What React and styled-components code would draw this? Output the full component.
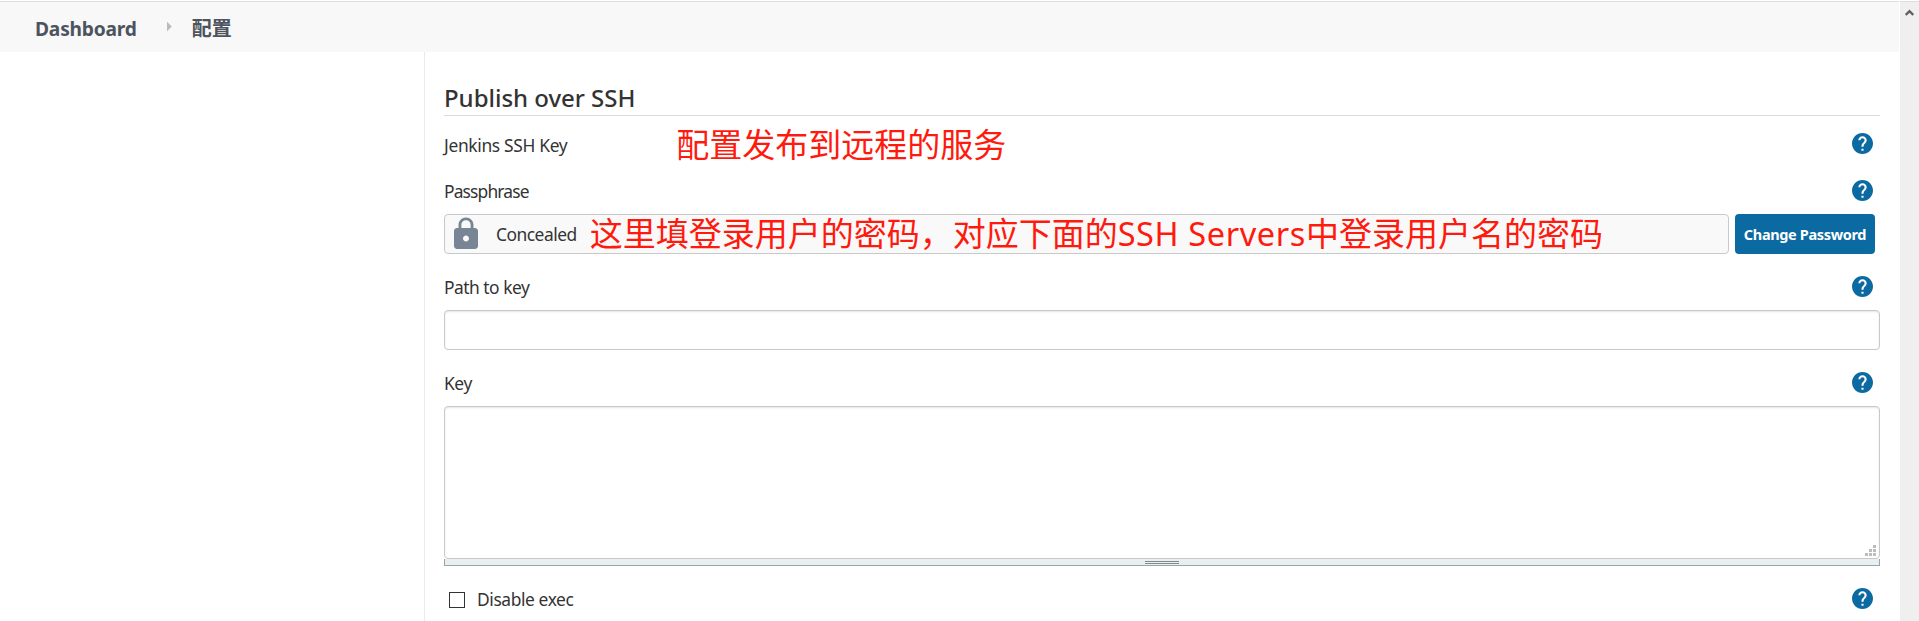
import React from "react";
import styled, { createGlobalStyle } from "styled-components";

const latin = `"Noto Sans", "Open Sans", "Noto Sans CJK SC", sans-serif`;

const GlobalStyle = createGlobalStyle`
  *, *::before, *::after { box-sizing: border-box; }
  body {
    margin: 0;
    background: #fff;
    color: #333;
    font-family: ${latin};
    font-size: 17.4px;
    overflow: hidden;
  }
`;

const Page = styled.div`
  display: flex;
  height: 621px;
`;

const Screen = styled.div`
  flex: 1;
  min-width: 0;
  display: flex;
  flex-direction: column;
`;

const Breadcrumbs = styled.nav`
  display: flex;
  align-items: center;
  height: 52px;
  margin-right: 1px;
  padding: 4px 0 0 35px;
  border-top: 1px solid #fff;
  background: #f8f8f8;
  box-shadow: inset 0 1px #dcdfdf;
`;

const Crumb = styled.a`
  color: #4d545d;
  font-size: ${(p) => p.$size}px;
  font-weight: 700;
  line-height: 28px;
  letter-spacing: ${(p) => p.$spacing || 0}px;
`;

const CrumbArrow = styled.span`
  width: 5px;
  height: 10px;
  margin: -4px 20px 0 30px;
  background: #bbb;
  clip-path: polygon(0 0, 100% 50%, 0 100%);
`;

const Body = styled.div`
  flex: 1;
  display: flex;
`;

const SidePanel = styled.aside`
  width: 425px;
  border-right: 1px solid #e6ebee;
`;

const Form = styled.main`
  flex: 1;
  display: flex;
  flex-direction: column;
  padding: 29px 20px 0 19px;
`;

const SectionTitle = styled.h2`
  height: 35px;
  margin: 0;
  border-bottom: 1px solid #dcdcdc;
  font-size: 24px;
  font-weight: 500;
  line-height: 33px;
  letter-spacing: ${(p) => p.$spacing}px;
  white-space: nowrap;
`;

const LabelRow = styled.div`
  display: flex;
  align-items: center;
  height: 24px;
  margin-top: ${(p) => p.$top}px;
  padding-right: 7px;
`;

const Label = styled.label`
  line-height: 24px;
  letter-spacing: ${(p) => p.$spacing || 0}px;
  white-space: nowrap;
`;

const Annotation = styled.span`
  color: #ff1a0e;
  font-family: "Noto Sans CJK SC", sans-serif;
  font-size: 33px;
  line-height: 36px;
  white-space: nowrap;
  margin: 0 0 ${(p) => p.$lift}px ${(p) => p.$left}px;
`;

const AnnotationLatin = styled.span`
  font-family: ${latin};
  font-size: 32.5px;
  letter-spacing: ${(p) => p.$spacing}px;
`;

const HelpSvg = styled.svg`
  display: block;
  flex: none;
  width: 21px;
  height: 21px;
  margin: 0 0 ${(p) => p.$lift}px auto;
  fill: #0b6aa2;
`;

const PasswordRow = styled.div`
  display: flex;
  gap: 6px;
  height: 40px;
  margin-top: 11px;
  padding-right: 5px;
`;

const Concealed = styled.div`
  flex: 1;
  display: flex;
  align-items: center;
  padding-left: 3px;
  border: 1px solid #c9c9c9;
  border-radius: 4px;
  background: #f9f9f9;
`;

const LockSvg = styled.svg`
  flex: none;
  width: 36px;
  height: 36px;
  margin-right: 12px;
  fill: #788594;
`;

const Button = styled.button`
  width: 140px;
  padding: 0;
  border: 0;
  border-radius: 4px;
  background: #0b6aa2;
  color: #fff;
  font: 700 14.5px ${latin};
  letter-spacing: ${(p) => p.$spacing}px;
  white-space: nowrap;
`;

const TextInput = styled.input`
  display: block;
  width: 100%;
  height: 40px;
  margin: 11px 0 0;
  border: 1px solid #c9c9c9;
  border-radius: 4px;
  box-shadow: inset 0 1px 2px rgba(0, 0, 0, 0.1);
`;

const TextArea = styled.div`
  display: flex;
  align-items: flex-end;
  justify-content: flex-end;
  height: 153px;
  margin-top: 11px;
  padding: 2px 3px;
  border: 1px solid #c9c9c9;
  border-radius: 4px;
  box-shadow: inset 0 1px 2px rgba(0, 0, 0, 0.1);
`;

const ResizeSvg = styled.svg`
  width: 11px;
  height: 11px;
  fill: #bdbdbd;
`;

const DragBar = styled.div`
  display: flex;
  justify-content: center;
  height: 7px;
  padding-top: 2px;
  border: 1px solid #9aa3a9;
  border-top: 0;
  background: #e9eef1;
`;

const Grip = styled.span`
  width: 34px;
  height: 3px;
  border: 1px solid #858b8b;
  border-width: 1px 0;
`;

const Checkbox = styled.span`
  width: 16px;
  height: 16px;
  margin: 2px 12px 0 5px;
  border: 1px solid #333;
  background: #fff;
`;

const Scrollbar = styled.div`
  width: 19px;
  height: 620px;
  margin-top: 1px;
  padding: 7px 0 0 5px;
  border-top: 1px solid #dcdfdf;
  background: #efefef;
`;

const Chevron = styled.svg`
  display: block;
  width: 9px;
  height: 7px;
`;

function Help({ lift = 1 }) {
  return (
    <HelpSvg viewBox="2 2 20 20" $lift={lift}>
      <path d="M12 2C6.48 2 2 6.48 2 12s4.48 10 10 10 10-4.48 10-10S17.52 2 12 2zm1 17h-2v-2h2v2zm2.07-7.75l-.9.92C13.45 12.9 13 13.5 13 15h-2v-.5c0-1.1.45-2.1 1.17-2.83l1.24-1.26c.37-.36.59-.86.59-1.41 0-1.1-.9-2-2-2s-2 .9-2 2H8c0-2.21 1.79-4 4-4s4 1.79 4 4c0 .88-.36 1.68-.93 2.25z" />
    </HelpSvg>
  );
}

export default function App() {
  return (
    <Page>
      <GlobalStyle />
      <Screen>
        <Breadcrumbs>
          <Crumb $size={19.2} $spacing={-0.2}>Dashboard</Crumb>
          <CrumbArrow />
          <Crumb $size={20}>配置</Crumb>
        </Breadcrumbs>
        <Body>
          <SidePanel />
          <Form>
            <SectionTitle $spacing={-0.03}>Publish over SSH</SectionTitle>
            <LabelRow $top={17}>
              <Label $spacing={-0.33}>Jenkins SSH Key</Label>
              <Annotation $left={109} $lift={5}>配置发布到远程的服务</Annotation>
              <Help lift={3} />
            </LabelRow>
            <LabelRow $top={22}>
              <Label $spacing={-0.85}>Passphrase</Label>
              <Help />
            </LabelRow>
            <PasswordRow>
              <Concealed>
                <LockSvg viewBox="0 0 24 24">
                  <path d="M18 8h-1V6c0-2.76-2.24-5-5-5S7 3.24 7 6v2H6c-1.1 0-2 .9-2 2v10c0 1.1.9 2 2 2h12c1.1 0 2-.9 2-2V10c0-1.1-.9-2-2-2zm-6 9c-1.100 0-2-.9-2-2s.9-2 2-2 2 .9 2 2-.9 2-2 2zm3.100-9H8.900V6c0-1.710 1.390-3.100 3.100-3.100 1.710 0 3.100 1.390 3.100 3.100v2z" />
                </LockSvg>
                <Label $spacing={-0.5}>Concealed</Label>
                <Annotation $left={13} $lift={2}>
                  这里填登录用户的密码，对应下面的
                  <AnnotationLatin $spacing={0.6}>SSH Servers</AnnotationLatin>
                  中登录用户名的密码
                </Annotation>
              </Concealed>
              <Button $spacing={-0.35}>Change Password</Button>
            </PasswordRow>
            <LabelRow $top={21}>
              <Label $spacing={-0.5}>Path to key</Label>
              <Help />
            </LabelRow>
            <TextInput />
            <LabelRow $top={21}>
              <Label $spacing={-0.4}>Key</Label>
              <Help />
            </LabelRow>
            <TextArea>
              <ResizeSvg viewBox="0 0 11 11">
                <path d="M8 0h3v3H8zM4 4h3v3H4zM8 4h3v3H8zM0 8h3v3H0zM4 8h3v3H4zM8 8h3v3H8z" />
              </ResizeSvg>
            </TextArea>
            <DragBar>
              <Grip />
            </DragBar>
            <LabelRow $top={21}>
              <Checkbox />
              <Label $spacing={-0.4}>Disable exec</Label>
              <Help />
            </LabelRow>
          </Form>
        </Body>
      </Screen>
      <Scrollbar>
        <Chevron viewBox="0 0 9 7">
          <path d="M0.7 6 4.5 2.2 8.3 6" fill="none" stroke="#606060" strokeWidth="2.4" />
        </Chevron>
      </Scrollbar>
    </Page>
  );
}
